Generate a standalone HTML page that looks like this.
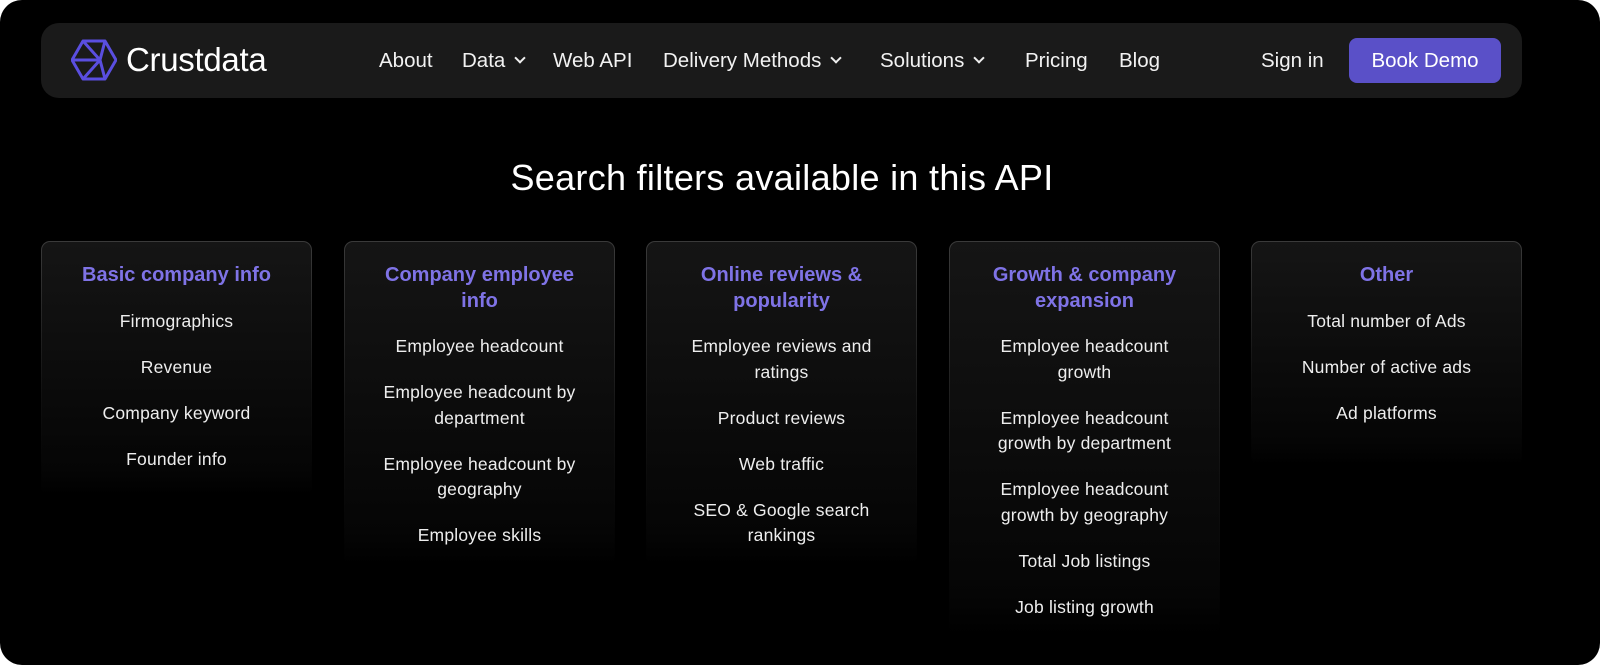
<!DOCTYPE html>
<html><head><meta charset="utf-8"><style>
*{margin:0;padding:0;box-sizing:border-box}
body{width:1600px;height:665px;background:#fff;font-family:"Liberation Sans",sans-serif;overflow:hidden;position:relative}
.outer{position:absolute;left:0;top:0;width:1600px;height:665px;background:#000;border-radius:22px}
.nav{position:absolute;left:41px;top:23px;width:1481px;height:75px;background:#1a1a1a;border-radius:18px;color:#f2f2f2}
.nav .logo{position:absolute;left:30px;top:16px}
.nav .brand{position:absolute;left:85px;top:18px;font-size:33px;color:#fff;letter-spacing:-0.3px}
.nav .l{position:absolute;top:26px;font-size:20.5px}
.chev{display:inline-block;width:8px;height:8px;border-right:2px solid #eee;border-bottom:2px solid #eee;transform:rotate(45deg);margin-left:11px;position:relative;top:-5px}
.btn{position:absolute;left:1308px;top:15px;width:152px;height:45px;background:#5a50c8;border-radius:8px;color:#fff;font-size:20.5px;text-align:center;line-height:45px}
h1{position:absolute;left:0;width:1564px;text-align:center;top:157px;color:#fff;font-weight:normal;font-size:36px;letter-spacing:0.3px}
.card{position:absolute;top:241px;width:271px;border-radius:9px;padding:1px;background:linear-gradient(#3a3a3a,rgba(40,40,40,0.4) 60%,rgba(0,0,0,0))}
.in{height:100%;border-radius:8px;background:linear-gradient(#151515,#050505 90%,#000);text-align:center;padding-top:21px}
.t{color:#7f73e6;font-weight:bold;font-size:20px;line-height:25.5px;padding:0 30px;margin-bottom:20px}
.i{color:#eee;font-size:17.5px;line-height:25.5px;margin-bottom:20.5px;padding:0 26px;letter-spacing:0.2px}
</style></head><body>
<div class="outer"></div>
<div class="nav">
<svg class="logo" width="46" height="42" viewBox="0 0 46 42"><g fill="none" stroke="#5a4ee0" stroke-width="3" stroke-linejoin="round"><polygon points="12,2 34,2 45,21 34,40 12,40 1,21"/><path d="M1,21 H29 M12,2 L29,21 L12,40 M34,2 L29,21 L34,40"/></g></svg>
<div class="brand">Crustdata</div>
<div class="l" style="left:338px">About</div>
<div class="l" style="left:421px">Data<span class="chev"></span></div>
<div class="l" style="left:512px">Web API</div>
<div class="l" style="left:622px">Delivery Methods<span class="chev"></span></div>
<div class="l" style="left:839px">Solutions<span class="chev"></span></div>
<div class="l" style="left:984px">Pricing</div>
<div class="l" style="left:1078px">Blog</div>
<div class="l" style="left:1220px">Sign in</div>
<div class="btn">Book Demo</div>
</div>
<h1>Search filters available in this API</h1>
<div class="card" style="left:41px;height:255px"><div class="in"><div class="t">Basic company info</div><div class="i">Firmographics</div><div class="i">Revenue</div><div class="i">Company keyword</div><div class="i">Founder info</div></div></div>
<div class="card" style="left:344px;height:325px"><div class="in"><div class="t">Company employee info</div><div class="i">Employee headcount</div><div class="i">Employee headcount by department</div><div class="i">Employee headcount by geography</div><div class="i">Employee skills</div></div></div>
<div class="card" style="left:646px;height:325px"><div class="in"><div class="t">Online reviews &amp; popularity</div><div class="i">Employee reviews and ratings</div><div class="i">Product reviews</div><div class="i">Web traffic</div><div class="i">SEO &amp; Google search rankings</div></div></div>
<div class="card" style="left:949px;height:395px"><div class="in"><div class="t">Growth &amp; company expansion</div><div class="i">Employee headcount growth</div><div class="i">Employee headcount growth by department</div><div class="i">Employee headcount growth by geography</div><div class="i">Total Job listings</div><div class="i">Job listing growth</div></div></div>
<div class="card" style="left:1251px;height:225px"><div class="in"><div class="t">Other</div><div class="i">Total number of Ads</div><div class="i">Number of active ads</div><div class="i">Ad platforms</div></div></div>
</body></html>
